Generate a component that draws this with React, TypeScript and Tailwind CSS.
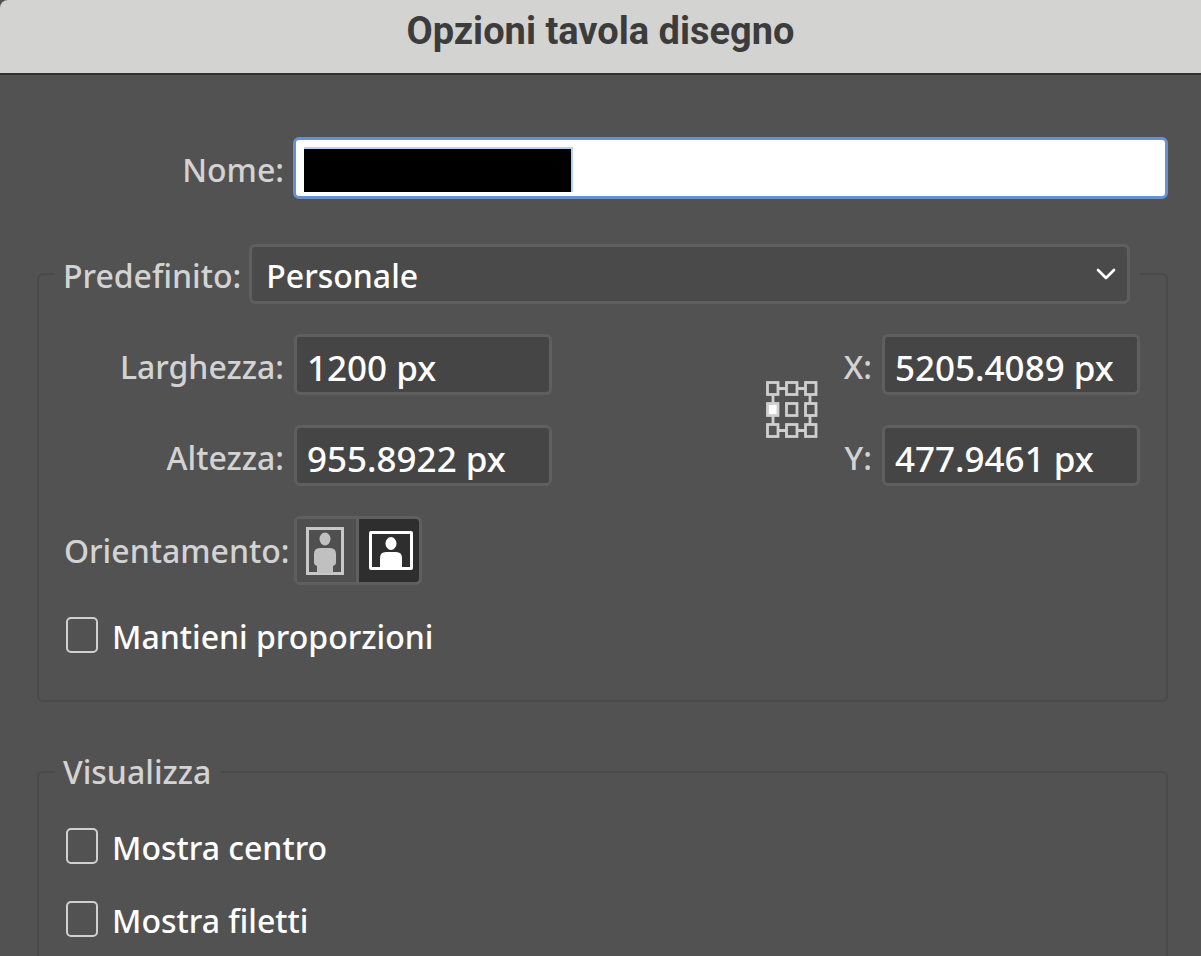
import { useState } from "react";
import { ChevronDown } from "lucide-react";

const labelClass = "text-right text-[32px] leading-10 font-medium text-[#d3d3d3] whitespace-nowrap";
const fieldClass =
    "h-[61px] w-full rounded-md border-3 border-[#5f5f5f] bg-[#454545] px-[10px] pt-[5px] text-[35px] leading-10 font-medium text-white outline-none";

function NumberField({ id, label, initial }: { id: string; label: string; initial: string }) {
    const [value, setValue] = useState(initial);
    return (
        <>
            <label htmlFor={id} className={`${labelClass} pt-1`}>
                {label}
            </label>
            <input
                id={id}
                type="text"
                className={fieldClass}
                value={value}
                onChange={(e) => setValue(e.target.value)}
            />
        </>
    );
}

function CheckRow({ id, label }: { id: string; label: string }) {
    return (
        <div className="flex items-center gap-[14px] pl-[2px]">
            <input
                id={id}
                type="checkbox"
                className="h-9 w-8 shrink-0 appearance-none rounded-[5px] border-2 border-[#d0d0d0] checked:bg-[#d0d0d0]"
            />
            <label htmlFor={id} className="pt-1 text-[32px] leading-10 font-medium text-white">
                {label}
            </label>
        </div>
    );
}

// Nine point reference grid, left middle is the active one
function ReferencePoint() {
    const xs = [1, 20, 39];
    const ys = [1, 22, 43];
    return (
        <svg width="52" height="58" viewBox="0 0 52 58" fill="none" stroke="#cfcfcf" strokeWidth="2.8" role="img" aria-label="Punto di riferimento">
            <path d="M12 7.5H20M31 7.5H39M12 49.5H20M31 49.5H39M7 13V22M7 34V43M44 13V22M44 34V43" />
            {ys.map((y) =>
                xs.map((x) => (
                    <rect key={`${x}-${y}`} x={x + 0.5} y={y + 0.5} width="10.5" height="12" fill={x === 1 && y === 22 ? "#ffffff" : "none"} />
                ))
            )}
        </svg>
    );
}

function PortraitIcon() {
    return (
        <svg width="38" height="48" viewBox="0 0 38 48">
            <rect x="1.5" y="1.5" width="35" height="45" fill="none" stroke="#c8c8c8" strokeWidth="3" />
            <ellipse cx="19" cy="12" rx="5.5" ry="6.5" fill="#c0c0c0" />
            <path d="M14 21H24Q30 21 30 27V36Q30 38 27 39V46H11V39Q8 38 8 36V27Q8 21 14 21Z" fill="#c0c0c0" />
        </svg>
    );
}

function LandscapeIcon() {
    return (
        <svg width="44" height="40" viewBox="0 0 44 40">
            <rect x="1.5" y="1.5" width="41" height="36" rx="0.5" fill="none" stroke="#ffffff" strokeWidth="3" />
            <ellipse cx="22" cy="12.5" rx="5.5" ry="6.5" fill="#ffffff" />
            <path d="M17 21H27Q33 21 33 27V38H11V27Q11 21 17 21Z" fill="#ffffff" />
        </svg>
    );
}

export default function App() {
    const [orientation, setOrientation] = useState("landscape");

    return (
        <div className="flex h-screen flex-col overflow-hidden bg-[#525252] font-['Noto_Sans','Open_Sans',sans-serif]">
            <header className="h-[75px] shrink-0 rounded-tl-lg border-b-2 border-[#303030] bg-[#d3d3d1] pt-2">
                <h1 className="text-center font-['Roboto',sans-serif] text-[38px] leading-[46px] font-bold text-[#3c3c3c]">
                    Opzioni tavola disegno
                </h1>
            </header>

            <main className="flex flex-col pt-[62px] pr-[33px] pl-[37px]">
                <div className="grid grid-cols-[247px_1fr] items-center gap-x-[9px]">
                    <label htmlFor="name" className={`${labelClass} pt-1`}>
                        Nome:
                    </label>
                    <div className="relative">
                        <input
                            id="name"
                            type="text"
                            className="block h-[62px] w-full rounded-md border-3 border-[#6690cf] bg-white px-3 text-[35px] text-black outline-none"
                        />
                        <span className="absolute top-[10px] left-[11px] h-[45px] w-[269px] border-t-2 border-r-2 border-[#b4d0f2] bg-black" />
                    </div>
                </div>

                <fieldset className="mt-[45px] rounded-md border-2 border-[#4a4a4a] pr-[26px] pb-[43px] pl-4">
                    <legend className="flex w-full items-center gap-2 pr-[10px] pl-2">
                        <label htmlFor="preset" className={`${labelClass} pt-1`}>
                            Predefinito:
                        </label>
                        <div className="relative flex-1">
                            <select
                                id="preset"
                                className="block h-[60px] w-full appearance-none rounded-md border-3 border-[#5f5f5f] bg-[#4a4a4a] px-[14px] pt-[3px] text-[32px] font-medium text-white outline-none"
                            >
                                <option>Personale</option>
                            </select>
                            <ChevronDown className="pointer-events-none absolute top-[14px] right-2 size-8 text-white" strokeWidth={2} />
                        </div>
                    </legend>

                    <div className="mt-[30px] flex items-center justify-between pl-[9px]">
                        <div className="grid grid-cols-[220px_258px] items-center gap-x-[10px] gap-y-[30px]">
                            <NumberField id="width" label="Larghezza:" initial="1200 px" />
                            <NumberField id="height" label="Altezza:" initial="955.8922 px" />
                        </div>
                        <div className="flex items-center gap-[26px]">
                            <ReferencePoint />
                            <div className="grid grid-cols-[auto_258px] items-center gap-x-[10px] gap-y-[30px]">
                                <NumberField id="x" label="X:" initial="5205.4089 px" />
                                <NumberField id="y" label="Y:" initial="477.9461 px" />
                            </div>
                        </div>
                    </div>

                    <div className="mt-[30px] grid grid-cols-[220px_1fr] items-center gap-x-[10px] pl-[9px]">
                        <span id="orientation" className={labelClass}>
                            Orientamento:
                        </span>
                        <div role="group" aria-labelledby="orientation" className="flex h-[69px] w-32 rounded-md border-3 border-[#5f5f5f]">
                            <button
                                type="button"
                                aria-label="Verticale"
                                aria-pressed={orientation === "portrait"}
                                onClick={() => setOrientation("portrait")}
                                className="flex w-[62px] items-center justify-center border-r-3 border-[#5f5f5f] bg-[#4f4f4f] pr-1"
                            >
                                <PortraitIcon />
                            </button>
                            <button
                                type="button"
                                aria-label="Orizzontale"
                                aria-pressed={orientation === "landscape"}
                                onClick={() => setOrientation("landscape")}
                                className="flex flex-1 items-center justify-center rounded-r-sm bg-[#2e2e2e] pl-1"
                            >
                                <LandscapeIcon />
                            </button>
                        </div>
                    </div>

                    <div className="mt-7 pl-[9px]">
                        <CheckRow id="constrain" label="Mantieni proporzioni" />
                    </div>
                </fieldset>

                <fieldset className="mt-[50px] rounded-md border-2 border-[#4a4a4a] px-4 pb-20">
                    <legend className="pr-[10px] pl-2">
                        <span className={labelClass}>Visualizza</span>
                    </legend>
                    <div className="mt-8 flex flex-col gap-[29px] pl-[9px]">
                        <CheckRow id="center" label="Mostra centro" />
                        <CheckRow id="crosshairs" label="Mostra filetti" />
                    </div>
                </fieldset>
            </main>
        </div>
    );
}
